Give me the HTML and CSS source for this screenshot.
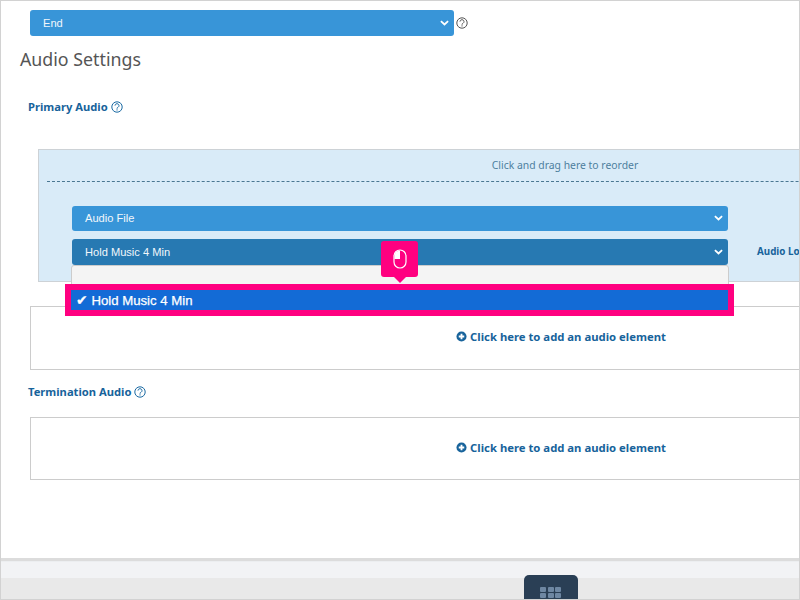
FILE: index.html
```html
<!DOCTYPE html>
<html lang="en">
<head>
<meta charset="utf-8">
<title>Audio Settings</title>
<link rel="stylesheet" href="styles.css">
</head>
<body>
<div class="page">
  <main class="content">
    <div class="end-row">
      <div class="select select-end">
        <span>End</span>
        <svg class="chevron" viewBox="0 0 10 6"><path d="M1 1l4 3.6L9 1"/></svg>
      </div>
      <svg class="help help-grey" viewBox="0 0 12 12"><circle cx="6" cy="6" r="5.200"/><path d="M4 4.600a2 1.900 0 1 1 3.100 1.600c-.8.4-1.100.8-1.100 1.500"/><path d="M6 8.300v1.200"/></svg>
    </div>
    <h1 class="title">Audio Settings</h1>
    <h2 class="section primary">Primary Audio
      <svg class="help" viewBox="0 0 12 12"><circle cx="6" cy="6" r="5.200"/><path d="M4 4.600a2 1.900 0 1 1 3.100 1.600c-.8.4-1.100.8-1.100 1.500"/><path d="M6 8.300v1.200"/></svg>
    </h2>
    <section class="panel">
      <div class="drag">Click and drag here to reorder</div>
      <div class="fields">
        <div class="select select-file">
          <span>Audio File</span>
          <svg class="chevron" viewBox="0 0 10 6"><path d="M1 1l4 3.6L9 1"/></svg>
        </div>
        <div class="second-row">
          <div class="select select-active">
            <span>Hold Music 4 Min</span>
            <svg class="chevron" viewBox="0 0 10 6"><path d="M1 1l4 3.6L9 1"/></svg>
          </div>
          <span class="loop">Audio Loop</span>
        </div>
      </div>
    </section>
    <div class="add-box add-first">
      <span class="add"><svg class="plus" viewBox="0 0 12 12"><circle cx="6" cy="6" r="5.500"/><path d="M3 6h6M6 3v6"/></svg>Click here to add an audio element</span>
    </div>
    <h2 class="section termination">Termination Audio
      <svg class="help" viewBox="0 0 12 12"><circle cx="6" cy="6" r="5.200"/><path d="M4 4.600a2 1.900 0 1 1 3.100 1.600c-.8.4-1.100.8-1.100 1.500"/><path d="M6 8.300v1.200"/></svg>
    </h2>
    <div class="add-box add-second">
      <span class="add"><svg class="plus" viewBox="0 0 12 12"><circle cx="6" cy="6" r="5.500"/><path d="M3 6h6M6 3v6"/></svg>Click here to add an audio element</span>
    </div>

    <div class="menu"></div>
    <div class="highlight"><span class="check">✔</span> Hold Music 4 Min</div>
    <div class="tip">
      <svg class="mouse" viewBox="0 0 14 20"><rect x="1" y="1" width="12" height="18" rx="6"/><path class="mouse-fill" d="M7 1.500a5.500 5.500 0 0 0-5.500 5.500v3h5.500z"/></svg>
    </div>
  </main>
  <footer class="footer">
    <div class="footer-top"></div>
    <div class="footer-bottom">
      <div class="handle">
        <div class="dots"><i></i><i></i><i></i><i></i><i></i><i></i></div>
      </div>
    </div>
  </footer>
</div>
</body>
</html>
```
FILE: styles.css
```css
* { box-sizing: border-box; }
html, body { margin: 0; height: 100%; }
body { overflow: hidden; background: #fff; font-family: "Noto Sans", "Open Sans", sans-serif; }
.page {
  width: 800px; height: 600px; display: flex; flex-direction: column;
  border: 1px solid #d2d2d2; overflow: hidden;
}
.content { position: relative; height: 557px; flex: none; overflow: hidden; background: #fff; }

.select {
  display: flex; align-items: center; justify-content: space-between;
  color: #f2f7fb; font: 11.1px "Liberation Sans", Arial, sans-serif;
  background: #3895d8; border-radius: 3px; padding: 0 5px 0 13px;
}
.chevron { width: 9px; height: 6px; fill: none; stroke: #fff; stroke-width: 2; }
.end-row { display: flex; align-items: center; gap: 2px; padding: 9px 0 0 29px; }
.select-end { width: 424px; height: 26px; }
.help { width: 12px; height: 12px; fill: none; stroke: #1a6aa3; stroke-width: 1; vertical-align: -2px; }
.help-grey { stroke: #555; }

.title { margin: 10px 0 0 19px; font-size: 17.8px; line-height: 26px; font-weight: 400; color: #555; }
.section { margin: 0; font-size: 11.2px; line-height: 16px; font-weight: 700; color: #17639b; }
.primary { margin: 27px 0 0 27px; }
.termination { margin: 14px 0 0 27px; }

.panel {
  width: 1054px; height: 133px; margin: 34px 0 0 37px;
  background: #d9ebf8; border: 1px solid #cdd2d6; padding: 0 8px;
}
.drag {
  height: 32px; padding-top: 7px; text-align: center;
  font-size: 10.4px; line-height: 16px; color: #4d7f9e;
  border-bottom: 1px dashed #4a7792;
}
.fields { padding: 24px 0 0 25px; display: flex; flex-direction: column; gap: 8px; }
.select-file { width: 656px; height: 25px; padding-bottom: 1px; }
.second-row { display: flex; align-items: center; gap: 29px; }
.select-active { width: 656px; height: 26px; background: #2779b2; }
.loop { font-size: 9.8px; font-weight: 700; color: #17639b; white-space: nowrap; padding-bottom: 2px; }

.add-box {
  width: 1062px; margin-left: 29px; border: 1px solid #ccc; background: #fff;
  display: flex; align-items: center; justify-content: center;
}
.add-first { height: 64px; margin-top: 24px; padding-bottom: 3px; }
.add-second { height: 63px; margin-top: 17px; padding-bottom: 2px; }
.add { font-size: 11.3px; font-weight: 700; color: #17639b; display: flex; align-items: center; gap: 3px; }
.plus { width: 11px; height: 11px; }
.plus circle { fill: #17639b; }
.plus path { stroke: #fff; stroke-width: 2; fill: none; }

.menu {
  position: absolute; left: 70px; top: 264px; width: 658px; height: 30px;
  background: #f4f4f4; border: 1px solid #ccc; border-radius: 3px;
}
.highlight {
  position: absolute; left: 64px; top: 283px; width: 669px; height: 32px;
  border: 6px solid #ff0080; background: #136bd6; color: #fff;
  font: 13.2px/20px "Liberation Sans", Arial, sans-serif; padding-left: 5px;
  white-space: nowrap; -webkit-text-stroke: 0.25px #fff;
}
.check { font-family: "DejaVu Sans", sans-serif; font-size: 14px; line-height: 20px; }
.tip {
  position: absolute; left: 380px; top: 240px; width: 37px; height: 36px;
  background: #ff0080; border-radius: 3px;
  display: flex; align-items: center; justify-content: center;
}
.tip::after {
  content: ""; position: absolute; left: 13px; bottom: -6px;
  border: 6px solid transparent; border-bottom: 0; border-top-color: #ff0080;
}
.mouse { width: 14px; height: 20px; fill: none; stroke: #fff; stroke-width: 1.2; }
.mouse-fill { fill: #fff; stroke: none; }

.footer { flex: 1; display: flex; flex-direction: column; border-top: 3px solid #dcdcdc; }
.footer-top { height: 17px; background: #f2f3f5; border-top: 1px solid #eceef0; }
.footer-bottom { flex: 1; background: #e9e9e9; position: relative; }
.handle {
  position: absolute; left: 523px; top: -3px; width: 54px; height: 24px;
  background: #2a3f55; border-radius: 5px 5px 0 0; padding: 12px 0 0 16px;
}
.dots { display: grid; grid-template-columns: repeat(3, 6px); gap: 1px 1.500px; }
.dots i { display: block; height: 5px; background: #6e87a2; border-radius: 1px; }
```
